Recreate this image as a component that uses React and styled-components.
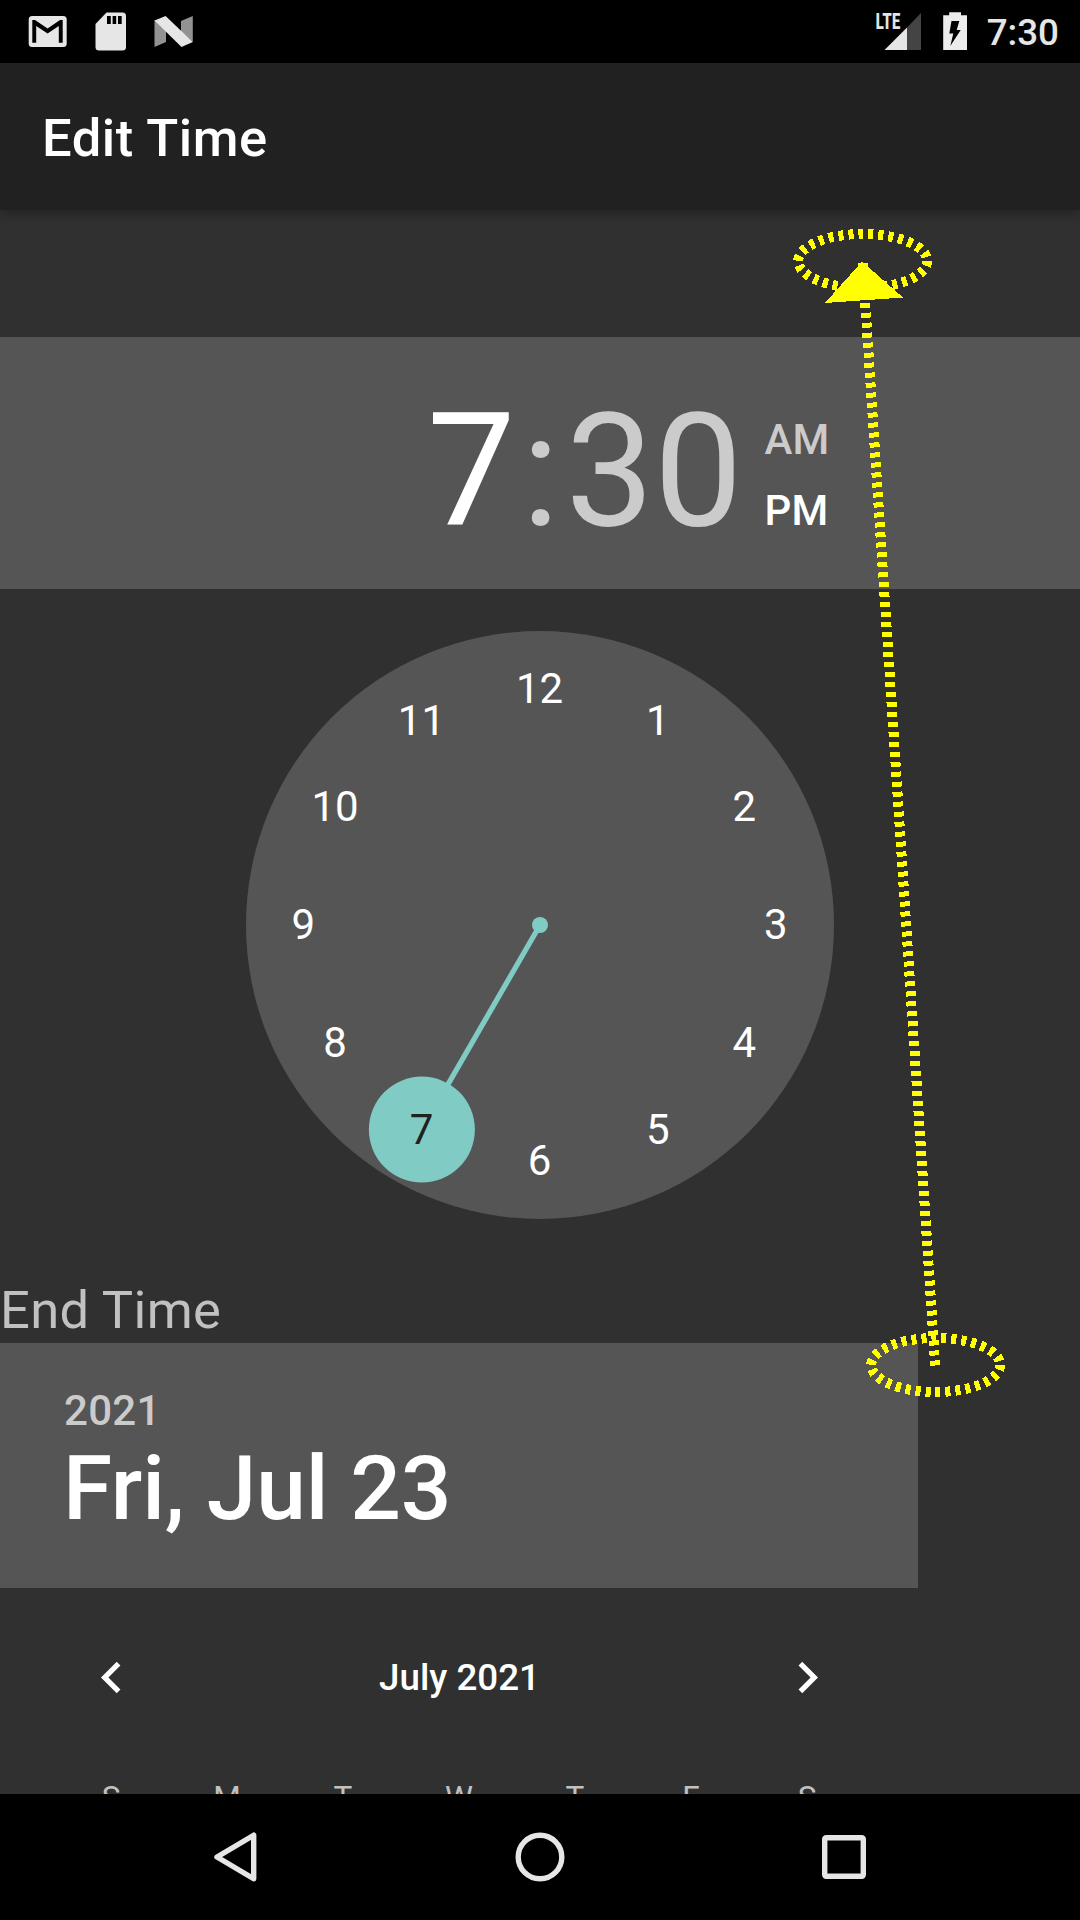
import React from "react";
import styled, { createGlobalStyle } from "styled-components";

const GlobalStyle = createGlobalStyle`
  html, body { margin: 0; padding: 0; background: #000; }
  *, *::before, *::after { box-sizing: border-box; }
`;

const Screen = styled.div`
  position: relative;
  width: 1080px;
  height: 1920px;
  display: flex;
  flex-direction: column;
  overflow: hidden;
  background: #303030;
  color: #fff;
  font-family: Roboto, "Liberation Sans", sans-serif;
`;

const StatusBar = styled.header`
  flex: none;
  height: 63px;
  display: flex;
  justify-content: space-between;
  background: #000;
`;

const StatusIcons = styled.svg`
  display: block;
  height: 63px;
  width: ${(p) => p.$width}px;
`;

const StatusRight = styled.div`
  display: flex;
  align-items: center;
  padding-right: 21px;
`;

const StatusClock = styled.span`
  width: 85px;
  font-size: 36.75px;
  line-height: 43px;
  font-weight: 500;
  color: #e6e6e6;
  text-align: right;
  padding-top: 2px;
`;

const AppBar = styled.div`
  flex: none;
  z-index: 1;
  height: 147px;
  display: flex;
  align-items: center;
  padding: 2px 42px 0;
  background: #212121;
  box-shadow: 0 4px 10px rgba(0, 0, 0, 0.28);
`;

const Title = styled.h1`
  margin: 0;
  font-size: 52.5px;
  line-height: 62px;
  font-weight: 500;
  letter-spacing: 0.55px;
`;

const Content = styled.main`
  flex: 1;
  min-height: 0;
  display: flex;
  flex-direction: column;
  padding-top: 127px;
  overflow: hidden;
`;

const TimeHeader = styled.section`
  flex: none;
  height: 252px;
  display: flex;
  padding: 42px 0 0 427px;
  background: #555;
`;

const TimeDigits = styled.span`
  font-size: 157.5px;
  line-height: 184px;
  color: ${(p) => (p.$active ? "#fff" : "#cbcbcb")};
`;

const Colon = styled(TimeDigits)`
  width: 50px;
  display: flex;
  justify-content: center;
`;

const AmPm = styled.div`
  display: flex;
  flex-direction: column;
  gap: 22px;
  padding: 36px 0 0 22px;
`;

const Meridiem = styled.span`
  font-size: 42px;
  line-height: 49px;
  font-weight: 500;
  color: ${(p) => (p.$active ? "#fff" : "#cbcbcb")};
`;

const ClockArea = styled.section`
  flex: none;
  height: 672px;
  display: flex;
  justify-content: center;
  padding-top: 42px;
`;

const Dial = styled.svg`
  display: block;
  width: 588px;
  height: 588px;
`;

const DialNumber = styled.text`
  font-size: 42px;
  text-anchor: middle;
  fill: ${(p) => (p.$selected ? "#212121" : "#fff")};
`;

const SectionLabel = styled.h2`
  flex: none;
  height: 82px;
  margin: 0;
  padding-top: 18px;
  font-size: 52.5px;
  line-height: 62px;
  font-weight: 400;
  letter-spacing: 0.35px;
  color: #c1c1c1;
`;

const DatePicker = styled.section`
  flex: none;
  width: 918px;
`;

const DateHeader = styled.div`
  height: 245px;
  display: flex;
  flex-direction: column;
  padding: 43px 63px 0;
  background: #555;
`;

const Year = styled.span`
  font-size: 42px;
  line-height: 49px;
  font-weight: 500;
  letter-spacing: 0.3px;
  padding-left: 1px;
  color: #cbcbcb;
`;

const DateText = styled.span`
  font-size: 89.25px;
  line-height: 107px;
  font-weight: 500;
  letter-spacing: -0.15px;
`;

const MonthBar = styled.div`
  height: 178px;
  display: flex;
  align-items: center;
  justify-content: space-between;
  padding: 0 79px 0 80px;
`;

const Chevron = styled.svg`
  display: block;
  width: 63px;
  height: 63px;
  fill: #fff;
`;

const MonthName = styled.span`
  font-size: 36.75px;
  line-height: 43px;
  font-weight: 500;
`;

const WeekRow = styled.div`
  display: grid;
  grid-template-columns: repeat(7, 116px);
  padding: 13px 0 0 53px;
`;

const Weekday = styled.span`
  font-size: 31.5px;
  line-height: 37px;
  text-align: center;
  color: #c1c1c1;
`;

const NavBar = styled.nav`
  flex: none;
  height: 126px;
  display: flex;
  justify-content: center;
  gap: 184px;
  background: #000;
`;

const NavIcon = styled.svg`
  display: block;
  width: 120px;
  height: 126px;
  fill: none;
  stroke: #e6e6e6;
  stroke-width: 5.4;
  stroke-linejoin: round;
`;

const GestureOverlay = styled.svg`
  position: absolute;
  inset: 0;
  width: 1080px;
  height: 1920px;
  pointer-events: none;
`;

const HOURS = [12, 1, 2, 3, 4, 5, 6, 7, 8, 9, 10, 11];
const WEEKDAYS = ["S", "M", "T", "W", "T", "F", "S"];
const CENTER = 294;
const NUMBER_RADIUS = 236.25;

function hourPosition(hour) {
  const angle = (hour * Math.PI) / 6;
  return {
    x: CENTER + NUMBER_RADIUS * Math.sin(angle),
    y: CENTER - NUMBER_RADIUS * Math.cos(angle),
  };
}

function ClockDial({ selected }) {
  const knob = hourPosition(selected);
  return (
    <Dial viewBox="0 0 588 588">
      <circle cx={CENTER} cy={CENTER} r={CENTER} fill="#555" />
      <line x1={CENTER} y1={CENTER} x2={knob.x} y2={knob.y} stroke="#80cbc4" strokeWidth="5.25" />
      <circle cx={CENTER} cy={CENTER} r="8" fill="#80cbc4" />
      <circle cx={knob.x} cy={knob.y} r="53" fill="#80cbc4" />
      {HOURS.map((hour) => {
        const { x, y } = hourPosition(hour);
        return (
          <DialNumber key={hour} x={x - 0.4} y={Math.floor(y + 14.6)} $selected={hour === selected}>
            {hour}
          </DialNumber>
        );
      })}
    </Dial>
  );
}

function NotificationIcons() {
  return (
    <StatusIcons $width={220} viewBox="0 0 220 63">
      <rect x="28.7" y="16" width="38" height="31" rx="3.5" fill="#e6e6e6" />
      <path d="M32.3 20H35L47.6 28.5L60 20H62.7V42.7H58.8V26L47.6 33.5L36.2 26V42.7H32.3Z" fill="#000" />
      <path d="M106.5 12.5H122.5A3.5 3.5 0 0 1 126 16V47A3.5 3.5 0 0 1 122.5 50.5H99A3.5 3.5 0 0 1 95.5 47V24Z" fill="#e6e6e6" />
      <path d="M107 16h3.800v8h-3.800zM112.600 16h3.600v8h-3.600zM118 16h3.700v8h-3.700z" fill="#000" />
      <path d="M154.5 20L166 30V42L154.5 47ZM181 21L192.8 16V42L181 32Z" fill="#929292" />
      <path d="M154.5 20.5L165.600 16L192.8 42L181.5 47Z" fill="#e6e6e6" />
    </StatusIcons>
  );
}

const LteLabel = styled.text`
  font-family: "Roboto Condensed", Roboto, "Liberation Sans", sans-serif;
  font-size: 22.5px;
  font-weight: 700;
  fill: #e6e6e6;
`;

function SystemIcons() {
  return (
    <StatusIcons $width={110} viewBox="0 0 110 63">
      <path d="M43 27.4L57 13V50H43Z" fill="#444" />
      <path d="M20.500 50L43 27.4V50Z" fill="#e6e6e6" />
      <LteLabel x="11.500" y="29" textLength="25" lengthAdjust="spacingAndGlyphs">
        LTE
      </LteLabel>
      <path d="M85.2 12.3H97V15.3H103V50H79.2V15.3H85.2Z" fill="#ececec" />
      <path d="M87.5 21H95.3L92.7 30H96.7L86.3 46L89.3 33.5H85.3Z" fill="#000" />
    </StatusIcons>
  );
}

export default function App() {
  return (
    <>
      <GlobalStyle />
      <Screen>
        <StatusBar>
          <NotificationIcons />
          <StatusRight>
            <SystemIcons />
            <StatusClock>7:30</StatusClock>
          </StatusRight>
        </StatusBar>
        <AppBar>
          <Title>Edit Time</Title>
        </AppBar>
        <Content>
          <TimeHeader>
            <TimeDigits $active>7</TimeDigits>
            <Colon>:</Colon>
            <TimeDigits>30</TimeDigits>
            <AmPm>
              <Meridiem>AM</Meridiem>
              <Meridiem $active>PM</Meridiem>
            </AmPm>
          </TimeHeader>
          <ClockArea>
            <ClockDial selected={7} />
          </ClockArea>
          <SectionLabel>End Time</SectionLabel>
          <DatePicker>
            <DateHeader>
              <Year>2021</Year>
              <DateText>Fri, Jul 23</DateText>
            </DateHeader>
            <MonthBar>
              <Chevron viewBox="0 0 24 24">
                <path d="M15.41 7.41L14 6l-6 6 6 6 1.41-1.41L10.83 12z" />
              </Chevron>
              <MonthName>July 2021</MonthName>
              <Chevron viewBox="0 0 24 24">
                <path d="M10 6L8.59 7.41 13.17 12l-4.58 4.59L10 18l6-6z" />
              </Chevron>
            </MonthBar>
            <WeekRow>
              {WEEKDAYS.map((day, i) => (
                <Weekday key={i}>{day}</Weekday>
              ))}
            </WeekRow>
          </DatePicker>
        </Content>
        <NavBar>
          <NavIcon viewBox="0 0 120 126">
            <path d="M41 63L77.7 41.2V84.8Z" />
          </NavIcon>
          <NavIcon viewBox="0 0 120 126">
            <circle cx="60" cy="63" r="21.8" />
          </NavIcon>
          <NavIcon viewBox="0 0 120 126">
            <rect x="40.7" y="43.7" width="38.6" height="38.6" rx="1.5" />
          </NavIcon>
        </NavBar>
        <GestureOverlay viewBox="0 0 1080 1920" shapeRendering="crispEdges">
          <g fill="none" stroke="#ff0" strokeWidth="10" strokeDasharray="5 5">
            <ellipse cx="862.7" cy="261" rx="64.5" ry="27" />
            <ellipse cx="935.7" cy="1365" rx="64.5" ry="27" />
            <line x1="935.2" y1="1365.5" x2="862.5" y2="262" />
          </g>
          <path d="M862 261.5L903 297.5L825 303Z" fill="#ff0" />
        </GestureOverlay>
      </Screen>
    </>
  );
}
